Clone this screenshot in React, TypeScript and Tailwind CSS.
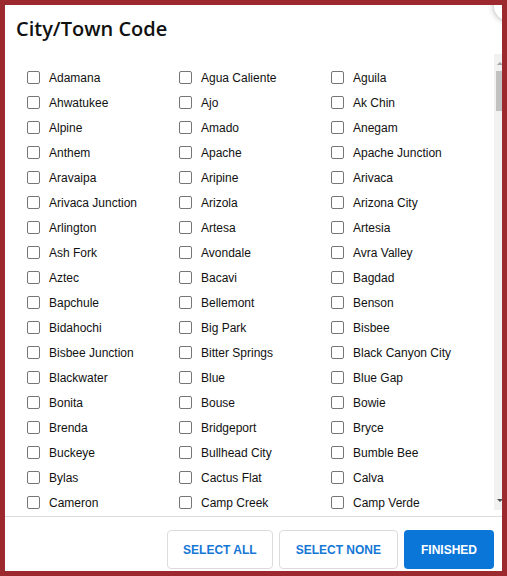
import React from "react";

const rows: string[][] = [
  ["Adamana", "Agua Caliente", "Aguila"],
  ["Ahwatukee", "Ajo", "Ak Chin"],
  ["Alpine", "Amado", "Anegam"],
  ["Anthem", "Apache", "Apache Junction"],
  ["Aravaipa", "Aripine", "Arivaca"],
  ["Arivaca Junction", "Arizola", "Arizona City"],
  ["Arlington", "Artesa", "Artesia"],
  ["Ash Fork", "Avondale", "Avra Valley"],
  ["Aztec", "Bacavi", "Bagdad"],
  ["Bapchule", "Bellemont", "Benson"],
  ["Bidahochi", "Big Park", "Bisbee"],
  ["Bisbee Junction", "Bitter Springs", "Black Canyon City"],
  ["Blackwater", "Blue", "Blue Gap"],
  ["Bonita", "Bouse", "Bowie"],
  ["Brenda", "Bridgeport", "Bryce"],
  ["Buckeye", "Bullhead City", "Bumble Bee"],
  ["Bylas", "Cactus Flat", "Calva"],
  ["Cameron", "Camp Creek", "Camp Verde"],
];

function Item({ label }: { label: string }) {
  return (
    <label className="flex items-center h-[25px] w-[152px]">
      <span className="w-[13px] h-[13px] border border-[#767676] rounded-[2px] bg-white shrink-0" />
      <span className="ml-[9px] text-[12px] leading-[14px] text-[#111] whitespace-nowrap">{label}</span>
    </label>
  );
}

export default function App() {
  return (
    <div
      className="w-[507px] h-[576px] bg-[#9b292d] p-[5px] overflow-hidden"
      style={{ fontFamily: '"Liberation Sans", Arial, sans-serif' }}
    >
      <div className="relative bg-white w-full h-full flex flex-col overflow-hidden">
        <div
          className="absolute top-[-14px] right-[-22px] w-[30px] h-[30px] rounded-full bg-white"
          style={{ boxShadow: "0 0 6px rgba(0,0,0,0.35)" }}
        />
        <div className="h-[49px] shrink-0 pl-[11px] pt-[10px]">
          <h1
            className="text-[20px] leading-[28px] font-semibold text-[#111]"
            style={{ fontFamily: '"Open Sans", "Noto Sans", sans-serif' }}
          >
            City/Town Code
          </h1>
        </div>
        <div className="h-[456px] shrink-0 flex">
          <div className="flex-1 overflow-hidden pl-[22px] pt-[11px]">
            {rows.map((r, i) => (
              <div key={i} className="flex">
                {r.map((c) => (
                  <Item key={c} label={c} />
                ))}
              </div>
            ))}
          </div>
          <div className="w-[8px] shrink-0 bg-[#f1f1f1] flex flex-col items-end">
            <div className="h-[8px] shrink-0" />
            <div className="w-0 h-0 border-l-[3px] border-r-[3px] border-b-[3px] border-l-transparent border-r-transparent border-b-[#a3a3a3] mr-[-1px]" />
            <div className="h-[6px] shrink-0" />
            <div className="w-[6px] h-[40px] bg-[#c1c1c1]" />
            <div className="flex-1" />
            <div className="w-0 h-0 border-l-[3px] border-r-[3px] border-t-[3px] border-l-transparent border-r-transparent border-t-[#505050] mr-[-1px]" />
            <div className="h-[8px] shrink-0" />
          </div>
        </div>
        <div className="mt-[6px] border-t border-[#dcdcdc] pt-[13px] pr-[8px] flex justify-end gap-[6px]">
          <button className="h-[39px] px-[15px] border border-[#dcdcdc] rounded-[4px] bg-white text-[#1577d6] text-[12px] font-bold whitespace-nowrap">
            SELECT ALL
          </button>
          <button className="h-[39px] px-[16px] border border-[#dcdcdc] rounded-[4px] bg-white text-[#1577d6] text-[12px] font-bold whitespace-nowrap">
            SELECT NONE
          </button>
          <button className="h-[39px] px-[17px] rounded-[4px] bg-[#0a76d8] text-white text-[12px] font-bold whitespace-nowrap">
            FINISHED
          </button>
        </div>
      </div>
    </div>
  );
}
